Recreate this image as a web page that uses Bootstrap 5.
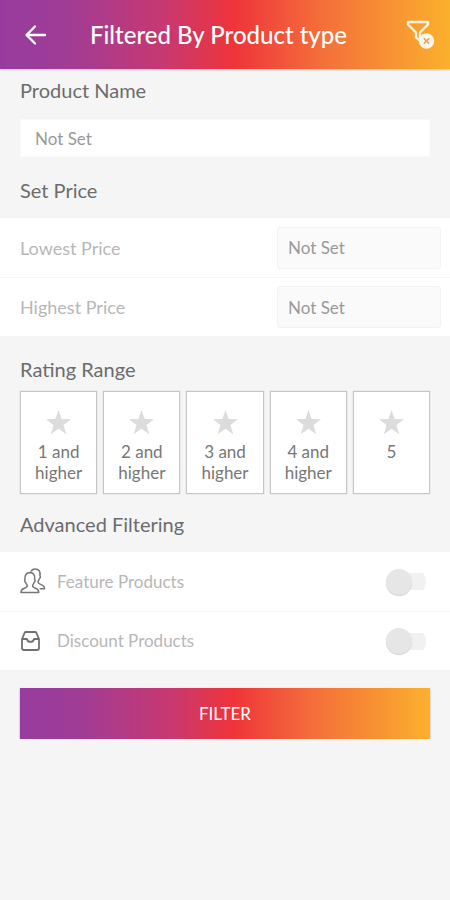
<!DOCTYPE html>
<html lang="en">
<head>
<meta charset="utf-8">
<meta name="viewport" content="width=device-width, initial-scale=1">
<title>Filtered By Product type</title>
<link href="https://cdn.jsdelivr.net/npm/bootstrap@5.3.0/dist/css/bootstrap.min.css" rel="stylesheet">
<style>
  :root { --brand: linear-gradient(90deg, #973c9f 0%, #a03c95 15%, #c93870 37%, #ef343a 52%, #f4703a 72%, #fbb02d 100%); }
  body { background: #f5f5f5; color: #6c6c6c; font-family: Lato, "Open Sans", sans-serif; font-size: 18px; line-height: 24px; }
  .topbar { background: var(--brand); height: 69px; padding: 0 15px 0 20px; box-shadow: 0 1px 2px #0003; }
  .topbar h1 { font-size: 24px; line-height: 32px; font-weight: 500; margin-left: 38px; }
  .section-title { font-size: 20px; line-height: 24px; font-weight: 400; color: #6c6c6c; margin: 0; padding: 21px 20px 0; }
  .section-title.first { padding-top: 9px; }
  .section-title.compact { padding-top: 18px; }
  .gutter { padding: 0 20px; }
  .field { font-size: 17px; line-height: 24px; color: #999; border-radius: 0; }
  .field::placeholder { color: #999; opacity: 1; }
  .name-area { margin-top: 17px; }
  .name-field { height: 38px; background: #fff; border: 1px solid #fafafa; padding: 0 14px; }
  .price-field { width: 164px; height: 42px; background: #fafafa; border: 1px solid #f3f3f3; border-radius: 3px; padding: 0 10px; }
  .rows { background: #fff; margin-top: 16px; }
  .line { min-height: 59px; padding: 0 9px 0 20px; }
  .line + .line { border-top: 1px solid #f5f5f5; }
  .line label { color: #b7b7b7; }
  .toggle-line { gap: 11px; font-size: 17px; }
  .toggle-line svg { min-width: 26px; }
  .rates { gap: 6px; margin-top: 10px; }
  .rate { flex: 1 1 0; min-height: 103px; background: #fff; border: 1px solid #c6c6c6; border-radius: 0; padding: 18px 2px 8px; color: #777; font-size: 17px; line-height: 21px; box-shadow: 0 0 1px #bbb; }
  .rate svg { display: block; margin: 0 auto 6px; }
  .btn-check:checked + .rate { border-color: #ef343a; color: #ef343a; }
  .toggle { appearance: none; width: 40px; height: 27px; margin: 0 15px 0 0; background: linear-gradient(#f1f1f1, #f1f1f1) right center / 34px 17px no-repeat; border-radius: 14px; display: flex; align-items: center; }
  .toggle::before { content: ""; width: 26px; height: 26px; border-radius: 50%; background: #e6e6e6; box-shadow: 0 1px 1px #d2d2d2; }
  .toggle:checked { justify-content: flex-end; }
  .submit { background: var(--brand); height: 51px; border: 0; border-radius: 0; color: #fff; font-size: 17px; box-shadow: 0 1px 2px #0005; }
  .submit-area { margin-top: 18px; }
</style>
</head>
<body>
<header class="topbar d-flex align-items-center text-white">
  <button type="button" class="btn p-0 border-0 text-white" aria-label="Back">
    <svg width="32" height="32" viewBox="0 0 32 32" class="d-block" fill="none" stroke="#fff" stroke-width="2.4" stroke-linecap="round" stroke-linejoin="round"><path d="M25 16H7M15 7.500L6.500 16l8.500 8.500"/></svg>
  </button>
  <h1 class="mb-0 flex-grow-1 text-nowrap">Filtered By Product type</h1>
  <button type="button" class="btn p-0 border-0" aria-label="Clear filter">
    <svg width="30" height="32" viewBox="0 0 30 32" class="d-block" fill="none"><path d="M3 3h20v2.500l-8 8v8l-4-3v-5L3 5.500z" stroke="#fff3df" stroke-width="2.400" stroke-linejoin="round"/><circle cx="21.500" cy="22" r="7.700" fill="#fff6e8"/><path d="M18.800 19.300l5.400 5.400M24.200 19.300l-5.400 5.400" stroke="#dfa06a" stroke-width="1.600"/></svg>
  </button>
</header>
<main>
  <form>
    <h2 class="section-title first"><label for="pname">Product Name</label></h2>
    <div class="gutter name-area"><input id="pname" type="text" class="form-control field name-field" placeholder="Not Set"></div>

    <h2 class="section-title">Set Price</h2>
    <div class="rows">
      <div class="line d-flex align-items-center justify-content-between"><label for="low">Lowest Price</label><input id="low" type="text" class="form-control field price-field" placeholder="Not Set"></div>
      <div class="line d-flex align-items-center justify-content-between"><label for="high">Highest Price</label><input id="high" type="text" class="form-control field price-field" placeholder="Not Set"></div>
    </div>

    <h2 class="section-title">Rating Range</h2>
    <svg class="d-none"><symbol id="star" viewBox="0 0 24 24"><path fill="#dcdcdc" d="M12 0l3 8.700 9 .2-7.200 5.500 2.600 8.900L12 18.100l-7.400 5.200 2.600-8.900L0 8.900l9-.2z"/></symbol></svg>
    <div class="rates gutter d-flex">
      <input type="radio" class="btn-check" name="rate" id="r1"><label class="btn rate" for="r1"><svg width="25" height="25"><use href="#star"/></svg>1 and higher</label>
      <input type="radio" class="btn-check" name="rate" id="r2"><label class="btn rate" for="r2"><svg width="25" height="25"><use href="#star"/></svg>2 and higher</label>
      <input type="radio" class="btn-check" name="rate" id="r3"><label class="btn rate" for="r3"><svg width="25" height="25"><use href="#star"/></svg>3 and higher</label>
      <input type="radio" class="btn-check" name="rate" id="r4"><label class="btn rate" for="r4"><svg width="25" height="25"><use href="#star"/></svg>4 and higher</label>
      <input type="radio" class="btn-check" name="rate" id="r5"><label class="btn rate" for="r5"><svg width="25" height="25"><use href="#star"/></svg>5</label>
    </div>

    <h2 class="section-title compact">Advanced Filtering</h2>
    <div class="rows">
      <div class="line toggle-line d-flex align-items-center">
        <svg width="26" height="27" viewBox="0 0 27 28" fill="none" stroke="#777" stroke-width="1.600" stroke-linejoin="round" stroke-linecap="round"><path d="M1 25.500c0-3 1.500-3.700 3.500-4.400 1.800-.6 3-1 3-2.600 0-1.300-1-1.800-1.700-3.500-1-.6-1.300-2.500-.6-3.200C4.600 7.500 6.500 4.800 10.200 4.800s5.700 2.700 5 7c.8.7.4 2.600-.5 3.200-.6 1.700-1.600 2.200-1.600 3.500 0 1.600 1.200 2 3 2.600 2 .7 3.400 1.400 3.400 4.400z"/><path d="M11.500 3.200C12.500 1.700 14 1 15.800 1c3.800 0 5.600 2.800 4.900 6.800.8.700.4 2.600-.5 3.200-.5 1.600-1.500 2.200-1.500 3.500 0 1.500 1 1.900 2.800 2.500 2.500.9 4 1.500 4 4.500H21"/></svg>
        <label for="feat" class="flex-grow-1">Feature Products</label><input id="feat" type="checkbox" role="switch" class="toggle">
      </div>
      <div class="line toggle-line d-flex align-items-center">
        <svg width="26" height="22" viewBox="0 0 26 22" fill="none" stroke="#707070" stroke-width="1.800" stroke-linejoin="round" stroke-linecap="round"><path d="M2 9l2.600-6.200Q5 2 6 2h9q1 0 1.400.8L19 9v9q0 2-2 2H4q-2 0-2-2zM2 9h5c.3 1.900 1.600 2.900 3.500 2.900S13.700 10.900 14 9h5"/></svg>
        <label for="disc" class="flex-grow-1">Discount Products</label><input id="disc" type="checkbox" role="switch" class="toggle">
      </div>
    </div>
    <div class="gutter submit-area"><button type="submit" class="btn submit w-100">FILTER</button></div>
  </form>
</main>
<script src="https://cdn.jsdelivr.net/npm/bootstrap@5.3.0/dist/js/bootstrap.bundle.min.js"></script>
</body>
</html>
